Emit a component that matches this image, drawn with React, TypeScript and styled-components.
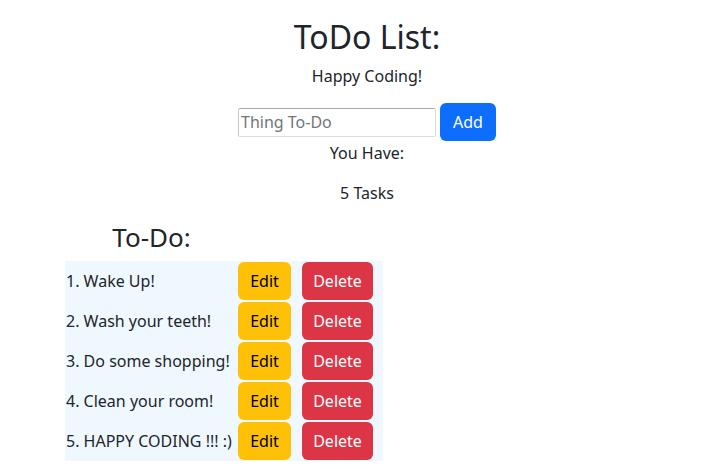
import React from "react";
import styled, { createGlobalStyle } from "styled-components";

const Global = createGlobalStyle`
  html, body { margin: 0; padding: 0; background: #fff; }
  body {
    font-family: "Noto Sans", "Open Sans", sans-serif;
    font-size: 16px;
    line-height: 1.5;
    color: #212529;
  }
  * { box-sizing: border-box; }
`;

const Page = styled.div`
  display: flex;
  flex-direction: column;
`;

const Header = styled.header`
  display: flex;
  flex-direction: column;
  align-items: center;
  padding-left: 6px;
`;

const Title = styled.h1`
  font-size: 32px;
  font-weight: 400;
  line-height: 1.2;
  margin: 18px 0 8px;
`;

const Text = styled.p<{ $mb?: number }>`
  margin: 0 0 ${(p) => p.$mb ?? 16}px;
  text-align: center;
`;

const Form = styled.form`
  display: flex;
  align-items: center;
  gap: 4px;
  margin: 0;
`;

const Input = styled.input`
  width: 198px;
  height: 29px;
  font-family: inherit;
  font-size: 16px;
  padding: 1px 2px;
  border: 1px solid #dcdcdc;
  border-top-color: #a9a9a9;
  border-left-color: #c8c8c8;
  border-radius: 2px;
  color: #212529;
  &::placeholder { color: #757575; }
`;

const Button = styled.button<{ $variant: "primary" | "warning" | "danger"; $w: number }>`
  width: ${(p) => p.$w}px;
  height: 38px;
  padding: 0;
  border: none;
  border-radius: 6px;
  font-family: inherit;
  font-size: 16px;
  line-height: 1.5;
  text-align: center;
  background: ${(p) =>
    p.$variant === "primary" ? "#0d6efd" : p.$variant === "warning" ? "#ffc107" : "#dc3545"};
  color: ${(p) => (p.$variant === "warning" ? "#000" : "#fff")};
`;

const ListSection = styled.section`
  margin-left: 65px;
  margin-top: 17px;
`;

const ListHeading = styled.h2`
  width: 173px;
  text-align: center;
  font-size: 26px;
  font-weight: 400;
  line-height: 1.2;
  margin: 0 0 7px;
`;

const Table = styled.div`
  display: grid;
  grid-template-columns: 173px 64px 81px;
  width: 318px;
  background: #eff7ff;
`;

const Row = styled.div`
  display: contents;
`;

const Cell = styled.div<{ $pad?: number }>`
  height: 40px;
  display: flex;
  align-items: center;
  padding-left: ${(p) => p.$pad ?? 0}px;
  white-space: nowrap;
`;

const tasks = [
  "Wake Up!",
  "Wash your teeth!",
  "Do some shopping!",
  "Clean your room!",
  "HAPPY CODING !!! :)",
];

export default function App() {
  return (
    <>
      <Global />
      <Page>
        <Header>
          <Title>ToDo List:</Title>
          <Text $mb={15}>Happy Coding!</Text>
          <Form onSubmit={(e) => e.preventDefault()}>
            <Input placeholder="Thing To-Do" />
            <Button type="submit" $variant="primary" $w={56}>Add</Button>
          </Form>
          <Text $mb={16}>You Have:</Text>
          <Text $mb={0}>{tasks.length} Tasks</Text>
        </Header>
        <ListSection>
          <ListHeading>To-Do:</ListHeading>
          <Table>
            {tasks.map((t, i) => (
              <Row key={i}>
                <Cell $pad={1}>{i + 1}. {t}</Cell>
                <Cell><Button $variant="warning" $w={53}>Edit</Button></Cell>
                <Cell><Button $variant="danger" $w={71}>Delete</Button></Cell>
              </Row>
            ))}
          </Table>
        </ListSection>
      </Page>
    </>
  );
}
